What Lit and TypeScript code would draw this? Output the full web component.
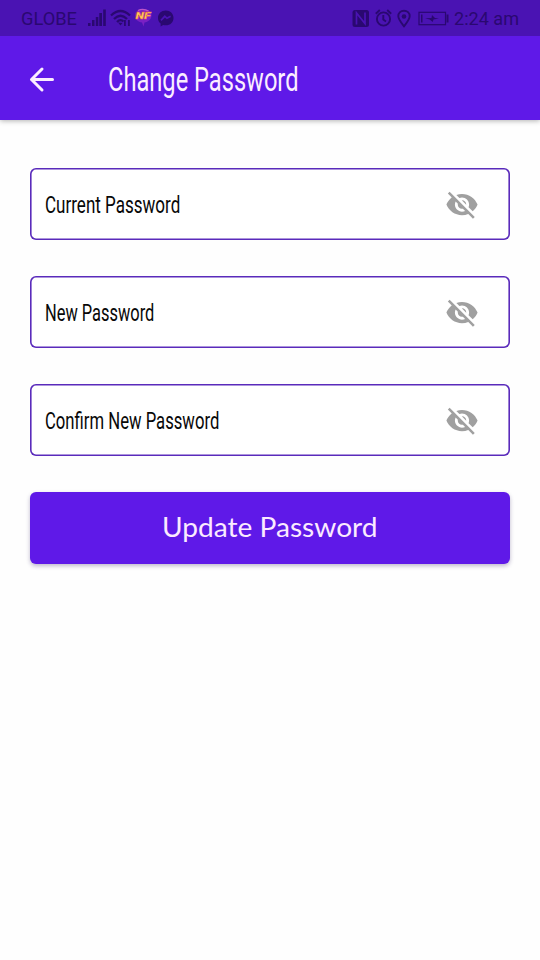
import { LitElement, html, css, svg } from "lit";
import { customElement, property } from "lit/decorators.js";

/** A single line of text fitted to a given width. */
@customElement("fit-text")
class FitText extends LitElement {
  @property() text = "";
  @property({ type: Number }) width = 100;
  @property({ type: Number }) height = 40;
  @property({ type: Number }) baseline = 28;

  static styles = css`
    :host { display: block; flex: none; }
    svg { display: block; overflow: visible; }
    text { fill: currentColor; }
  `;

  render() {
    return html`<svg width=${this.width} height=${this.height}>
      ${svg`<text x="0" y=${this.baseline} textLength=${this.width} lengthAdjust="spacingAndGlyphs">${this.text}</text>`}
    </svg>`;
  }
}

@customElement("status-bar")
class StatusBar extends LitElement {
  static styles = css`
    :host {
      position: relative;
      z-index: 1;
      display: flex;
      justify-content: space-between;
      height: 36px;
      padding: 0 21px;
      background: #4a13b3;
      color: #2a0871;
      font-family: Roboto, "Liberation Sans", sans-serif;
      font-size: 17.8px;
    }
    .group { display: flex; }
    svg { display: block; flex: none; }
    .badge { font: italic 900 9px Roboto, sans-serif; }
  `;

  render() {
    return html`
      <div class="group">
        <fit-text text="GLOBE" .width=${56} .height=${36} .baseline=${25}></fit-text>
        <svg width="110" height="36" viewBox="77 0 110 36" fill="currentColor">
          <path d="M88 23h2.500v3H88zM92 20h2.500v6H92zM95.800 17h2.500v9h-2.500zM99.300 13h2.700v13h-2.700zM103.200 9.500h2.600v16.500h-2.600z" />
          <g fill="none" stroke="currentColor" stroke-width="2.300">
            <path d="M111 15.500Q120.500 6.500 130 15.500M114 19Q120.500 12.500 127 19M117 22Q120.500 18.500 123.500 21.500" />
          </g>
          <path d="M118 22.500l2.500 3 2-2.500zM124 20h1.800v6H124zM128 20h1.800v6H128z" />
          <path d="M143 9c5 0 8.500 2.500 8.500 6.500 0 4-3.500 6.500-7 7l-1 4-1.500-4c-4-.5-7-3-7-7S138.500 9 143 9z" fill="#7a20c4" />
          <path d="M138 10.500q5-2.500 10.500.5" fill="none" stroke="#bd55c7" stroke-width="1.300" />
          <text class="badge" x="135.500" y="19" textLength="15" lengthAdjust="spacingAndGlyphs" fill="#ffd05a" stroke="#e9563c" stroke-width=".3">NF</text>
          <path d="M165.800 10.500c-4.500 0-7.800 3.200-7.800 7.400 0 2.300 1 4.200 2.600 5.500v3l2.600-1.400c.8.2 1.700.3 2.600.3 4.500 0 7.700-3.200 7.700-7.400s-3.200-7.400-7.700-7.400z" />
          <path d="M161 20.300l3.800-4 2.200 2 3.600-2" fill="none" stroke="#4a13b3" stroke-width="1.700" />
        </svg>
      </div>
      <div class="group">
        <svg width="102" height="36" viewBox="352 0 102 36" fill="currentColor">
          <rect x="352.500" y="10" width="16.500" height="17" rx="2.500" />
          <path d="M356.500 24.500V13l8.500 10.500V12.500" fill="none" stroke="#4a13b3" stroke-width="1.700" />
          <g fill="none" stroke="currentColor" stroke-width="1.900">
            <circle cx="383.500" cy="19" r="6.600" />
            <path d="M383.300 15v4.500l2.700 2M375.800 13.700l4-3.700M391.200 13.700l-4-3.700" />
            <path d="M404 26.300c-3.200-4-5.700-7-5.700-10 0-3.300 2.500-5.500 5.700-5.500s5.700 2.200 5.700 5.500c0 3-2.500 6-5.700 10z" />
            <rect x="419" y="12.300" width="26.500" height="12.400" stroke-width="1.200" />
          </g>
          <circle cx="404" cy="16.500" r="2.300" />
          <path d="M421 14.500h1.500v8H421zM446.500 14.500h2v8h-2z" />
          <path d="M425 18.300l6.500-.3.500-3 3 3 4 .5-5.500 1-.8 2.500-3-2.500z" />
        </svg>
        <fit-text text="2:24 am" .width=${65} .height=${36} .baseline=${25}></fit-text>
      </div>
    `;
  }
}

@customElement("password-field")
class PasswordField extends LitElement {
  @property() label = "";
  @property({ type: Number }) labelWidth = 100;

  static styles = css`
    :host {
      box-sizing: border-box;
      display: flex;
      align-items: center;
      justify-content: space-between;
      height: 72px;
      padding: 0 31px 0 14.500px;
      border-radius: 6px;
      background: #fff;
      box-shadow: inset 0 0 0 1.600px #5a2bbb;
      color: #080808;
      font: 23px Roboto, "Liberation Sans", sans-serif;
    }
    svg { display: block; fill: #a0a0a0; }
  `;

  render() {
    return html`
      <fit-text .text=${this.label} .width=${this.labelWidth} .height=${72} .baseline=${45.4}></fit-text>
      <svg width="34" height="34" viewBox="0 -0.4 24 24">
        <path d="M12 7c2.760 0 5 2.240 5 5 0 .65-.13 1.260-.36 1.830l2.920 2.920c1.510-1.260 2.700-2.890 3.430-4.750-1.730-4.390-6-7.500-11-7.500-1.400 0-2.740.25-3.980.7l2.160 2.160C10.740 7.130 11.350 7 12 7zM2 4.270l2.280 2.280.46.46C3.080 8.300 1.780 10.020 1 12c1.730 4.390 6 7.500 11 7.500 1.550 0 3.030-.3 4.380-.84l.42.42L19.730 22 21 20.730 3.270 3 2 4.270zM7.530 9.800l1.550 1.550c-.05.21-.08.43-.08.65 0 1.660 1.340 3 3 3 .22 0 .44-.03.65-.08l1.550 1.550c-.67.33-1.410.53-2.200.53-2.760 0-5-2.240-5-5 0-.79.2-1.530.53-2.200zm4.310-.78l3.150 3.150.02-.16c0-1.660-1.340-3-3-3l-.17.01z" />
      </svg>
    `;
  }
}

@customElement("app-root")
class AppRoot extends LitElement {
  static styles = css`
    :host {
      display: flex;
      flex-direction: column;
      height: 960px;
      background: #fefefe;
    }
    .toolbar {
      display: flex;
      align-items: center;
      height: 84px;
      padding-left: 29px;
      background: #5f19e8;
      box-shadow: 0 1px 5px rgba(0, 0, 0, 0.3);
      color: #fbeeff;
      font: 32.500px Roboto, "Liberation Sans", sans-serif;
    }
    .back { display: block; margin-right: 52.500px; }
    .form {
      display: flex;
      flex-direction: column;
      gap: 36px;
      padding: 48px 30px;
    }
    .submit {
      display: flex;
      justify-content: center;
      height: 72px;
      padding: 0;
      border: 0;
      border-radius: 6px;
      background: #5f19e8;
      box-shadow: 0 2px 4px rgba(40, 20, 90, 0.3);
      color: #fbeaff;
      font: 26px Lato, "Open Sans", sans-serif;
    }
  `;

  render() {
    return html`
      <status-bar></status-bar>
      <header class="toolbar">
        <svg class="back" width="26" height="84" viewBox="29 36 26 84" fill="none" stroke="#fbeeff" stroke-width="3" stroke-linecap="round" stroke-linejoin="round">
          <path d="M42 69L31.500 79.500 42 90M31.500 79.500H52.500" />
        </svg>
        <fit-text text="Change Password" .width=${190.5} .height=${84} .baseline=${54.8}></fit-text>
      </header>
      <main class="form">
        <password-field label="Current Password" .labelWidth=${135.3}></password-field>
        <password-field label="New Password" .labelWidth=${109.3}></password-field>
        <password-field label="Confirm New Password" .labelWidth=${174.3}></password-field>
        <button class="submit">
          <fit-text text="Update Password" .width=${215.5} .height=${72} .baseline=${44.5}></fit-text>
        </button>
      </main>
    `;
  }
}
